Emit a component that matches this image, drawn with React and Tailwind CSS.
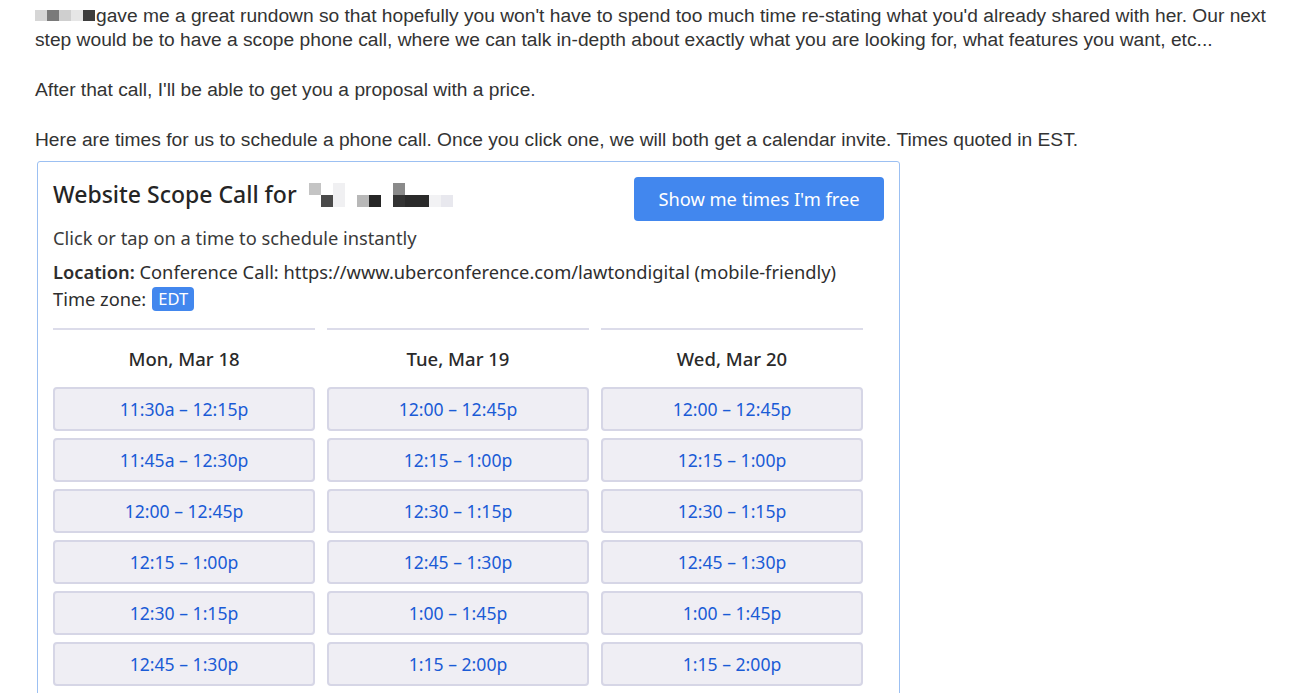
import React from 'react';

const days = [
  {
    label: 'Mon, Mar 18',
    slots: ['11:30a – 12:15p', '11:45a – 12:30p', '12:00 – 12:45p', '12:15 – 1:00p', '12:30 – 1:15p', '12:45 – 1:30p'],
  },
  {
    label: 'Tue, Mar 19',
    slots: ['12:00 – 12:45p', '12:15 – 1:00p', '12:30 – 1:15p', '12:45 – 1:30p', '1:00 – 1:45p', '1:15 – 2:00p'],
  },
  {
    label: 'Wed, Mar 20',
    slots: ['12:00 – 12:45p', '12:15 – 1:00p', '12:30 – 1:15p', '12:45 – 1:30p', '1:00 – 1:45p', '1:15 – 2:00p'],
  },
];

const Redacted = () => (
  <span className="inline-flex items-center align-middle mr-[1px] -mt-[3px]">
    <span className="w-[12px] h-[11px] bg-[#d6d6d6]" />
    <span className="w-[12px] h-[11px] bg-[#7a7a7a]" />
    <span className="w-[12px] h-[11px] bg-[#cfcfcf]" />
    <span className="w-[12px] h-[11px] bg-[#e6e6e6]" />
    <span className="w-[12px] h-[11px] bg-[#3d3d3d]" />
  </span>
);

const RedactedName = () => (
  <span className="inline-flex items-end ml-[12px] h-[26px]">
    <span className="flex flex-col">
      <span className="w-[12px] h-[12px] bg-[#c4c4c4]" />
      <span className="w-[12px] h-[12px] bg-white" />
    </span>
    <span className="w-[12px] h-[12px] bg-[#4a4a4a]" />
    <span className="w-[12px] h-[24px] bg-[#f0f0f2]" />
    <span className="w-[12px]" />
    <span className="w-[12px] h-[12px] bg-[#b8b8b8]" />
    <span className="w-[12px] h-[12px] bg-[#262626]" />
    <span className="w-[12px]" />
    <span className="flex flex-col">
      <span className="w-[12px] h-[12px] bg-[#8a8a8a]" />
      <span className="w-[12px] h-[12px] bg-[#333333]" />
    </span>
    <span className="w-[24px] h-[12px] bg-[#2a2a2a]" />
    <span className="w-[12px] h-[12px] bg-[#f2f2f4]" />
    <span className="w-[12px] h-[12px] bg-[#e8e8ee]" />
  </span>
);

const App = () => {
  return (
    <div className="bg-white h-screen overflow-hidden pl-[35px] pt-[4px] text-[#333333] font-['Liberation_Sans',Arial,sans-serif] text-[19.2px] leading-[24px]">
      <p className="w-[1240px]">
        <Redacted />
        gave me a great rundown so that hopefully you won't have to spend too much time re-stating what you'd already shared with her. Our next step would be to have a scope phone call, where we can talk in-depth about exactly what you are looking for, what features you want, etc...
      </p>
      <p className="mt-[26px]">After that call, I'll be able to get you a proposal with a price.</p>
      <p className="mt-[26px]">Here are times for us to schedule a phone call. Once you click one, we will both get a calendar invite. Times quoted in EST.</p>

      <div className="mt-[9px] ml-[2px] w-[863px] border border-[#9cc0f2] rounded-[3px] px-[15px] pt-[15px] pb-[20px] font-['Noto_Sans',sans-serif] text-[#2b2b2b]">
        <div className="flex items-start justify-between">
          <h2 className="flex items-center text-[23px] leading-[34px] font-medium text-[#252525]">
            Website Scope Call for
            <RedactedName />
          </h2>
          <button className="w-[250px] h-[44px] bg-[#4287ee] text-white rounded-[4px] text-[18.3px]">
            Show me times I'm free
          </button>
        </div>
        <p className="mt-[4px] text-[18.3px] leading-[26px] text-[#3a3a3a]">Click or tap on a time to schedule instantly</p>
        <p className="mt-[8px] text-[18.3px] leading-[26px] text-[#2e2e2e]">
          <span className="font-semibold">Location:</span> Conference Call: https://www.uberconference.com/lawtondigital (mobile-friendly)
        </p>
        <p className="text-[18.3px] leading-[28px] text-[#2e2e2e] flex items-center">
          Time zone:
          <span className="ml-[6px] bg-[#4287ee] text-white rounded-[4px] px-[6px] text-[16.5px] leading-[24px]">EDT</span>
        </p>

        <div className="mt-[15px] grid grid-cols-[262px_262px_262px] gap-x-[12px]">
          {days.map((d) => (
            <div key={d.label} className="border-t-2 border-[#dcdcea]">
              <div className="h-[57px] flex items-center justify-center text-[18.5px] font-medium text-[#2a2a2a]">
                {d.label}
              </div>
              <div className="flex flex-col gap-[7px]">
                {d.slots.map((s) => (
                  <button
                    key={s}
                    className="h-[44px] w-full rounded-[4px] bg-[#efeef4] border-2 border-[#d6d6e6] text-[#1a5bd6] text-[17.6px]"
                  >
                    {s}
                  </button>
                ))}
              </div>
            </div>
          ))}
        </div>
      </div>
    </div>
  );
};

export default App;
